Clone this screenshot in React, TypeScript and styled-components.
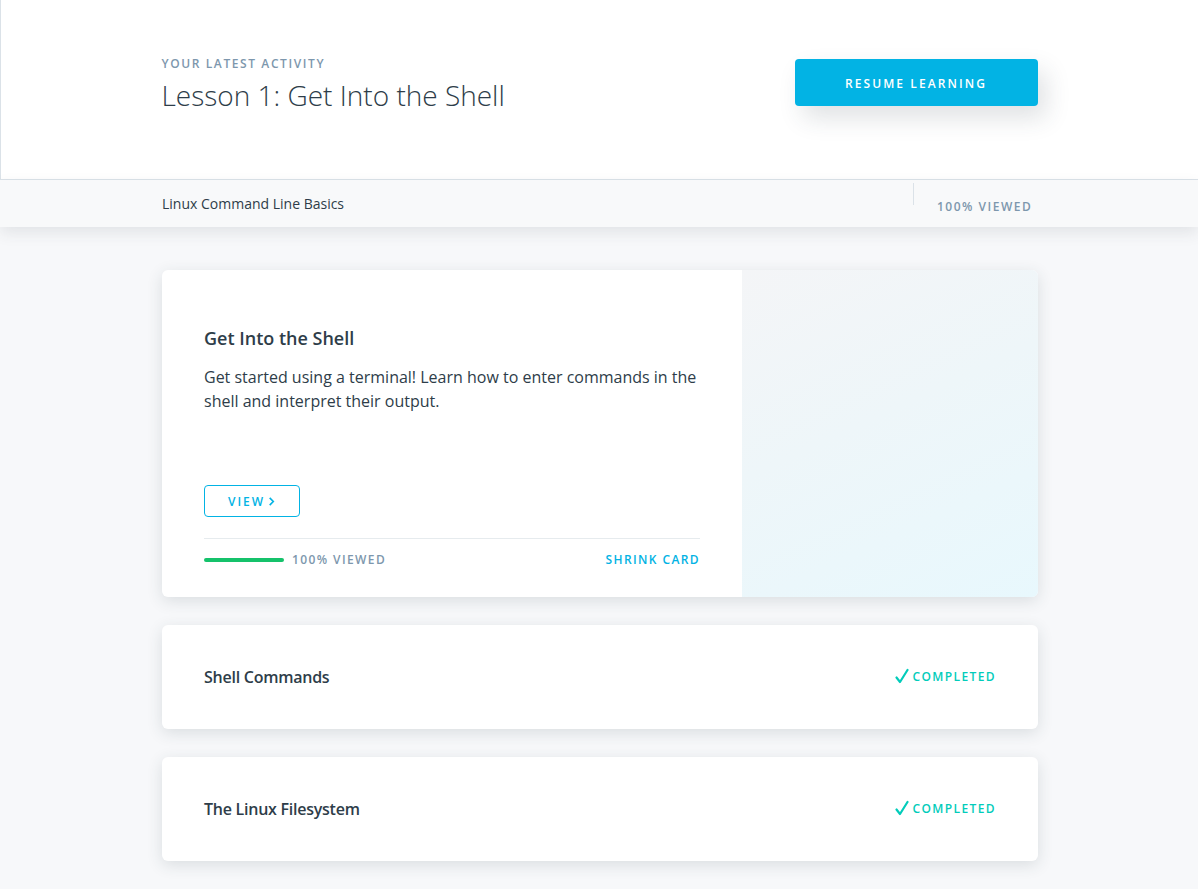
import styled, { createGlobalStyle } from 'styled-components'

const GlobalStyle = createGlobalStyle`
  html, body {
    margin: 0;
    padding: 0;
    background: #f7f8fa;
    font-family: 'Open Sans', 'Noto Sans', sans-serif;
    color: #2e3d49;
    -webkit-font-smoothing: antialiased;
  }
  * { box-sizing: border-box; }
`

const Page = styled.div`
  min-height: 889px;
  background: #f7f8fa;
`

const Header = styled.header`
  background: #ffffff;
  height: 180px;
  padding-top: 57px;
  border-left: 1px solid #dbe2e8;
  border-bottom: 1px solid #dbe2e8;
`

const Container = styled.div`
  width: 876px;
  margin-left: calc(50% - 437px);
`

const HeaderRow = styled(Container)`
  display: flex;
  justify-content: space-between;
  align-items: flex-start;
  margin-left: calc(50% - 438px);
`

const Eyebrow = styled.div`
  font-size: 12px;
  line-height: 14px;
  font-weight: 600;
  letter-spacing: 1.6px;
  text-transform: uppercase;
  color: #7d97ad;
`

const Title = styled.h1`
  margin: 6px 0 0;
  font-size: 28px;
  line-height: 36px;
  font-weight: 300;
  color: #2e3d49;
`

const PrimaryButton = styled.button`
  margin-top: 2px;
  width: 243px;
  height: 47px;
  border: none;
  border-radius: 4px;
  background: #02b3e4;
  color: #ffffff;
  font-family: inherit;
  font-size: 12px;
  font-weight: 600;
  letter-spacing: 2.1px;
  text-transform: uppercase;
  padding-top: 2px;
  box-shadow: 8px 12px 24px rgba(46, 61, 73, 0.15);
  cursor: pointer;
`

const SubBar = styled.div`
  background: #f8f9fa;
  height: 47px;
  box-shadow: 0 6px 14px rgba(46, 61, 73, 0.1);
  position: relative;
`

const SubRow = styled(Container)`
  display: flex;
  justify-content: space-between;
  height: 47px;
`

const CourseName = styled.div`
  font-size: 14px;
  line-height: 20px;
  padding-top: 14px;
  color: #2e3d49;
`

const Stat = styled.div`
  width: 125px;
  display: flex;
  align-items: flex-start;
`

const VDivider = styled.span`
  width: 1px;
  height: 22px;
  margin-top: 3px;
  background: #dbe2e8;
`

const StatLabel = styled.span`
  margin-left: 23px;
  padding-top: 20px;
  font-size: 12px;
  line-height: 14px;
  font-weight: 600;
  letter-spacing: 1.5px;
  color: #7d97ad;
  text-transform: uppercase;
  white-space: nowrap;
`

const Main = styled(Container)`
  padding-top: 43px;
  display: flex;
  flex-direction: column;
  gap: 28px;
`

const Card = styled.div`
  background: #ffffff;
  border-radius: 6px;
  box-shadow: 0 4px 16px rgba(46, 61, 73, 0.14);
  overflow: hidden;
`

const FeatureCard = styled(Card)`
  display: flex;
  height: 327px;
`

const FeatureBody = styled.div`
  width: 580px;
  padding: 56px 42px 0;
  display: flex;
  flex-direction: column;
`

const FeatureArt = styled.div`
  flex: 1;
  background: linear-gradient(155deg, #f4f5f7 0%, #eef6f9 45%, #e8f8fd 100%);
`

const CardTitle = styled.h2`
  margin: 0;
  font-size: 18px;
  line-height: 24px;
  font-weight: 600;
  color: #2e3d49;
`

const Description = styled.p`
  margin: 15px 0 0;
  font-size: 16px;
  line-height: 24px;
  color: #2e3d49;
`

const OutlineButton = styled.button`
  margin-top: 72px;
  width: 96px;
  height: 32px;
  border: 1px solid #02b3e4;
  border-radius: 4px;
  background: #ffffff;
  color: #02b3e4;
  font-family: inherit;
  font-size: 12px;
  font-weight: 600;
  letter-spacing: 2px;
  display: flex;
  align-items: center;
  justify-content: center;
  gap: 2px;
  cursor: pointer;

  svg {
    width: 9px;
    height: 9px;
  }
`

const Footer = styled.div`
  margin-top: 21px;
  border-top: 1px solid #e6ebee;
  padding-top: 13px;
  display: flex;
  align-items: center;
  justify-content: space-between;
  height: 16px;
  box-sizing: content-box;
`

const Progress = styled.div`
  display: flex;
  align-items: center;
  gap: 8px;
`

const Track = styled.div`
  width: 80px;
  height: 4px;
  border-radius: 2px;
  background: #15c26b;
`

const SmallLabel = styled.span<{ $color?: string }>`
  font-size: 12px;
  line-height: 16px;
  font-weight: 600;
  letter-spacing: 1.4px;
  text-transform: uppercase;
  color: ${({ $color }) => $color ?? '#7d97ad'};
`

const LessonCard = styled(Card)`
  height: 104px;
  padding: 0 42px;
  display: flex;
  align-items: center;
  justify-content: space-between;
`

const LessonTitle = styled.div`
  font-size: 16px;
  line-height: 24px;
  font-weight: 600;
  letter-spacing: -0.25px;
  color: #2e3d49;
`

const Completed = styled.div`
  display: flex;
  align-items: center;
  gap: 3px;
  margin-top: -2px;
  font-size: 12px;
  font-weight: 600;
  letter-spacing: 1.4px;
  color: #02ccba;
  text-transform: uppercase;

  svg {
    width: 14px;
    height: 16px;
  }
`

function Check() {
  return (
    <svg viewBox="0 0 14 16" fill="none" stroke="currentColor" strokeWidth={2.2} strokeLinecap="round" strokeLinejoin="round">
      <path d="M1.5 9.5l3.5 4.5 7.5-12" />
    </svg>
  )
}

const lessons = ['Shell Commands', 'The Linux Filesystem']

export default function App() {
  return (
    <Page>
      <GlobalStyle />
      <Header>
        <HeaderRow>
          <div>
            <Eyebrow>Your latest activity</Eyebrow>
            <Title>Lesson 1: Get Into the Shell</Title>
          </div>
          <PrimaryButton>Resume Learning</PrimaryButton>
        </HeaderRow>
      </Header>

      <SubBar>
        <SubRow>
          <CourseName>Linux Command Line Basics</CourseName>
          <Stat>
            <VDivider />
            <StatLabel>100% Viewed</StatLabel>
          </Stat>
        </SubRow>
      </SubBar>

      <Main>
        <FeatureCard>
          <FeatureBody>
            <CardTitle>Get Into the Shell</CardTitle>
            <Description>
              Get started using a terminal! Learn how to enter commands in the shell and interpret their output.
            </Description>
            <OutlineButton>
              VIEW
              <svg viewBox="0 0 10 10" fill="none" stroke="currentColor" strokeWidth={1.8}>
                <path d="M3 1l4 4-4 4" />
              </svg>
            </OutlineButton>
            <Footer>
              <Progress>
                <Track />
                <SmallLabel>100% Viewed</SmallLabel>
              </Progress>
              <SmallLabel $color="#02b3e4">Shrink Card</SmallLabel>
            </Footer>
          </FeatureBody>
          <FeatureArt />
        </FeatureCard>

        {lessons.map((name) => (
          <LessonCard key={name}>
            <LessonTitle>{name}</LessonTitle>
            <Completed>
              <Check />
              Completed
            </Completed>
          </LessonCard>
        ))}
      </Main>
    </Page>
  )
}
